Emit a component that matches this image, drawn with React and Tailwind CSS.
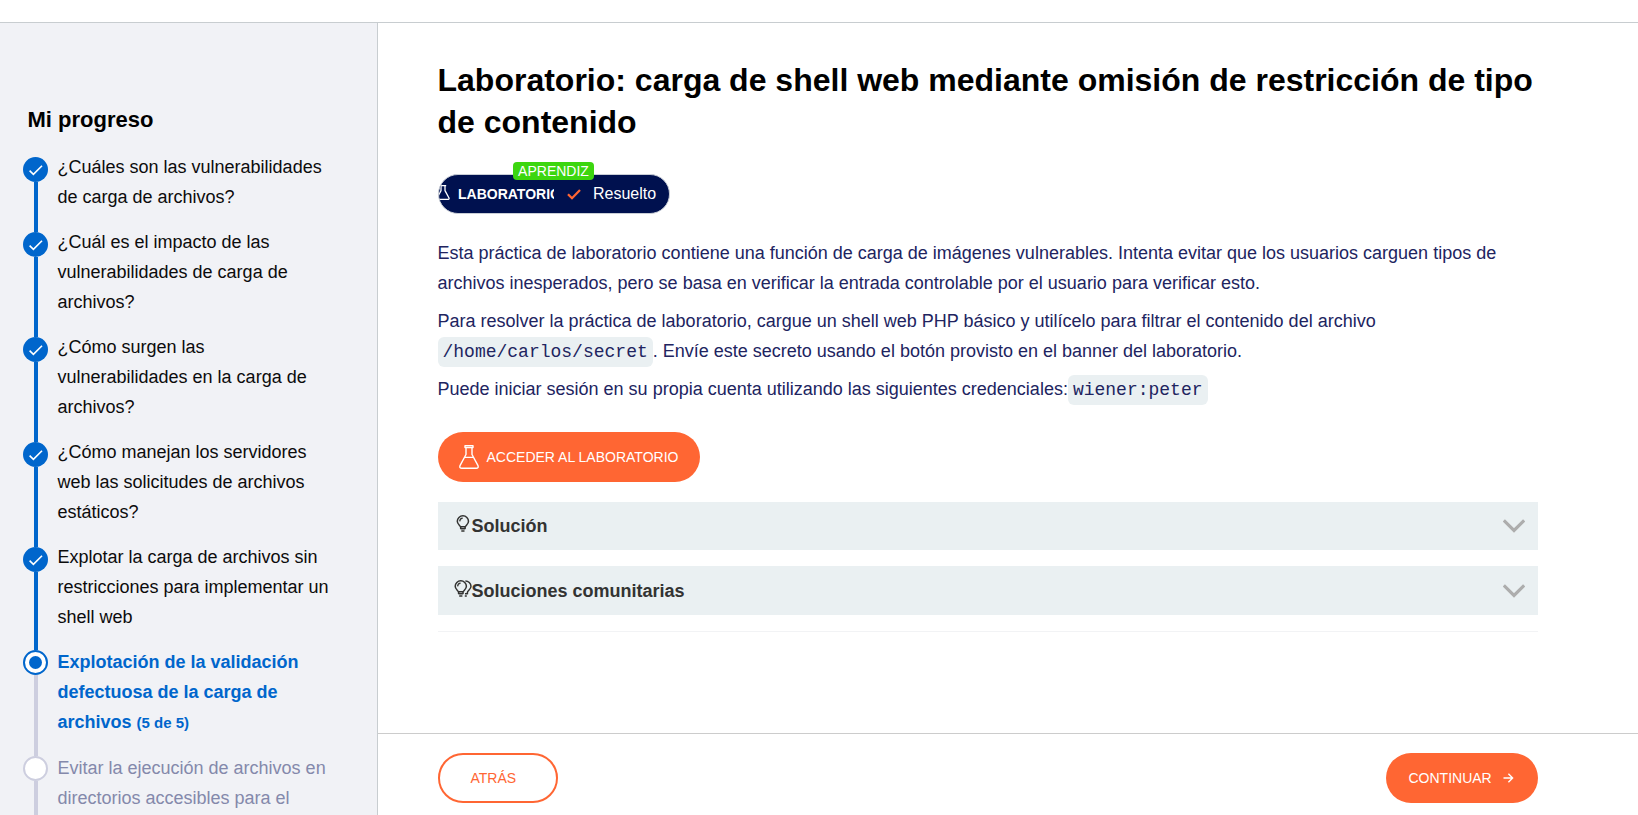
const steps = [
  { lines: ["¿Cuáles son las vulnerabilidades", "de carga de archivos?"], state: "done" },
  { lines: ["¿Cuál es el impacto de las", "vulnerabilidades de carga de", "archivos?"], state: "done" },
  { lines: ["¿Cómo surgen las", "vulnerabilidades en la carga de", "archivos?"], state: "done" },
  { lines: ["¿Cómo manejan los servidores", "web las solicitudes de archivos", "estáticos?"], state: "done" },
  { lines: ["Explotar la carga de archivos sin", "restricciones para implementar un", "shell web"], state: "done" },
  { lines: ["Explotación de la validación", "defectuosa de la carga de", "archivos"], note: "(5 de 5)", state: "current" },
  { lines: ["Evitar la ejecución de archivos en", "directorios accesibles para el"], state: "todo" },
];

const textStyle = {
  done: "pb-[15px] text-[#0c0c0c]",
  current: "pb-4 font-bold text-[#0066cc]",
  todo: "pb-[15px] text-[#8489ab]",
};

function Marker({ state }) {
  if (state === "done") {
    return (
      <span className="flex size-[25px] shrink-0 items-center justify-center rounded-full bg-[#0066cc]">
        <svg width="25" height="25" viewBox="0 0 25 25" fill="none" stroke="#fff" strokeWidth="1.6">
          <path d="M6.6 13.6L10.4 17.4L19 8.7" />
        </svg>
      </span>
    );
  }
  if (state === "current") {
    return (
      <span className="flex size-[25px] shrink-0 items-center justify-center rounded-full border-2 border-[#0066cc] bg-white">
        <span className="size-[13px] rounded-full bg-[#0066cc]" />
      </span>
    );
  }
  return <span className="size-[25px] shrink-0 rounded-full border-2 border-[#cdcedf] bg-white" />;
}

function Step({ step, first }) {
  const { state } = step;
  const above = first ? "bg-transparent" : state === "todo" ? "bg-[#cdcedf]" : "bg-[#0066cc]";
  return (
    <li className="flex gap-[9.5px]">
      <div className="flex w-[25px] shrink-0 flex-col items-center">
        <span className={`w-1 shrink-0 ${state === "done" ? "h-[5px]" : "h-[3px]"} ${above}`} />
        <Marker state={state} />
        <span className={`w-1 grow ${state === "done" ? "bg-[#0066cc]" : "bg-[#cdcedf]"}`} />
      </div>
      <div className={`text-[18px] leading-[30px] whitespace-nowrap ${textStyle[state]}`}>
        {step.lines.map((line, i) => (
          <div key={line} className="h-[30px]">
            {line}
            {step.note && i === step.lines.length - 1 && (
              <>
                {" "}
                <span className="text-[15px]">{step.note}</span>
              </>
            )}
          </div>
        ))}
      </div>
    </li>
  );
}

function Flask({ className }) {
  return (
    <svg className={className} viewBox="0 0 20 24" fill="none" stroke="#fff" strokeWidth="1.4" strokeLinejoin="round" strokeLinecap="round">
      <path d="M6 0.8H14V2.6H6ZM7 3V9.5L1 20.6Q0.2 23.2 2.8 23.2H17.2Q19.8 23.2 19 20.6L13 9.5V3M5.6 12.4H14.4" />
    </svg>
  );
}

function SmallFlask({ className }) {
  return (
    <svg className={className} viewBox="0 0 14 15" fill="none" stroke="#fff" strokeWidth="1.3" strokeLinejoin="round">
      <path d="M3.8 0.7H10.2M5 0.7V5.6L1 13Q0.6 14.3 1.8 14.3H12.2Q13.4 14.3 13 13L9 5.6V0.7" />
    </svg>
  );
}

function Bulb({ double }) {
  return (
    <svg className="-mt-[5px] h-[17px] w-[18px] shrink-0" viewBox="0 0 18 17" fill="none" stroke="#333332" strokeWidth="1.5">
      <g transform={double ? "translate(0 0)" : "translate(2.1 0)"}>
        <path d="M4.6 14V12.6C4.6 10.6 1.2 9.6 1.2 6.3A5.6 5.5 0 0 1 12.4 6.3C12.4 9.6 9 10.6 9 12.6V14M4.4 11.8H9.2M4.4 13.8H9.2M5.2 15.9H8.4" />
        <path d="M3.6 6.4Q3.8 3.4 6.6 3.2" strokeWidth="1.2" />
      </g>
      {double && <path d="M11.4 1A5.6 5.5 0 0 1 17 6.3C17 9.6 13.4 10.6 13.4 12.6V14.2M11 13.8H13.6M10.8 15.9H12.8" />}
    </svg>
  );
}

function Panel({ title, double, className }) {
  return (
    <div className={`flex items-center bg-[#eaf0f2] pr-[13px] text-[18px] font-bold text-[#333332] ${className}`}>
      <div className="flex w-[34px] justify-end">
        <Bulb double={double} />
      </div>
      <span className="grow leading-[30px]">{title}</span>
      <svg width="22" height="14" viewBox="0 0 22 14" fill="none" stroke="#adadad" strokeWidth="3.2">
        <path d="M0.8 1.4L11 11.4L21.2 1.4" />
      </svg>
    </div>
  );
}

function Code({ children }) {
  return (
    <code className="relative top-px inline-block h-[30px] rounded-[6px] bg-[#eaf0f2] px-[5px] align-top font-['Liberation_Mono',monospace] text-[18px] leading-[30px]">
      {children}
    </code>
  );
}

export default function App() {
  return (
    <div className="flex h-screen flex-col overflow-hidden bg-white font-['Liberation_Sans',Arial,sans-serif] text-black">
      <header className="h-[23px] shrink-0 border-b border-[#c8cdd0]" />
      <div className="flex min-h-0 grow">
        <aside className="w-[378px] shrink-0 overflow-hidden border-r border-[#c8cdd0] bg-[#f1f2f6] pt-[82px] pl-[23px]">
          <h2 className="mb-[17px] pl-[4.5px] text-[22px] leading-[30px] font-bold">Mi progreso</h2>
          <ol>
            {steps.map((step, i) => (
              <Step key={step.lines[0]} step={step} first={i === 0} />
            ))}
          </ol>
        </aside>

        <div className="flex grow flex-col">
          <main className="min-h-0 w-[1160px] grow overflow-hidden pt-9 pl-[59.5px]">
            <h1 className="text-[32px] leading-[42px] font-bold">
              Laboratorio: carga de shell web mediante omisión de restricción de tipo
              <br />
              de contenido
            </h1>

            <div className="relative mt-[31px] h-[39px] w-[232px]">
              <div className="flex h-[39.5px] items-center overflow-hidden rounded-full border border-[#c9ced6] bg-[#00114f] text-white">
                <div className="flex w-[115.5px] items-center overflow-hidden whitespace-nowrap">
                  <SmallFlask className="-mt-[3px] -ml-[2.5px] h-[15px] w-[14px] shrink-0" />
                  <span className="ml-2 text-[14px] leading-5 font-bold">LABORATORIO</span>
                </div>
                <svg className="ml-[13px] shrink-0" width="14" height="12" viewBox="0 0 14 12" fill="none" stroke="#ff6633" strokeWidth="2.3">
                  <path d="M1 6.2L5 10.2L13 2" />
                </svg>
                <span className="ml-3 text-[16px] leading-5">Resuelto</span>
              </div>
              <span className="absolute -top-3 left-[75.5px] h-[18px] w-[81px] rounded-[4px] bg-[#3cd60f] text-center text-[14px] leading-[18px] text-white">
                APRENDIZ
              </span>
            </div>

            <div className="mt-[25px] flex flex-col gap-2 text-[18px] leading-[30px] text-[#21245f]">
              <p>
                Esta práctica de laboratorio contiene una función de carga de imágenes vulnerables. Intenta evitar que los usuarios carguen tipos de
                archivos inesperados, pero se basa en verificar la entrada controlable por el usuario para verificar esto.
              </p>
              <p>
                Para resolver la práctica de laboratorio, cargue un shell web PHP básico y utilícelo para filtrar el contenido del archivo
                <br />
                <Code>/home/carlos/secret</Code>. Envíe este secreto usando el botón provisto en el banner del laboratorio.
              </p>
              <p>
                Puede iniciar sesión en su propia cuenta utilizando las siguientes credenciales:<Code>wiener:peter</Code>
              </p>
            </div>

            <button className="mt-7 flex h-[50px] w-[262px] items-center rounded-full bg-[#ff6633] pl-[21.5px] text-[14px] text-white">
              <Flask className="mr-[7.5px] h-6 w-5 shrink-0" />
              ACCEDER AL LABORATORIO
            </button>

            <Panel title="Solución" className="mt-5 h-12" />
            <Panel title="Soluciones comunitarias" double className="mt-4 h-[49px]" />
            <hr className="mt-4 border-[#f2f3f5]" />
          </main>

          <footer className="flex h-[82px] shrink-0 border-t border-[#cccccc] pt-[19px] pr-[100px] pl-[59.5px]">
            <div className="flex grow justify-between text-[14px]">
              <button className="flex h-[50px] w-[120.5px] items-center rounded-full border-2 border-[#ff6633] pl-[31px] text-[#ff6633]">ATRÁS</button>
              <button className="flex h-[50px] w-[152px] items-center rounded-full bg-[#ff6633] pl-[22.5px] text-white">
                CONTINUAR
                <svg className="ml-[11.5px]" width="11" height="10" viewBox="0 0 11 10" fill="none" stroke="#fff" strokeWidth="1.4">
                  <path d="M0.5 5H9.6M5.4 0.8L9.6 5L5.4 9.2" />
                </svg>
              </button>
            </div>
          </footer>
        </div>
      </div>
    </div>
  );
}
